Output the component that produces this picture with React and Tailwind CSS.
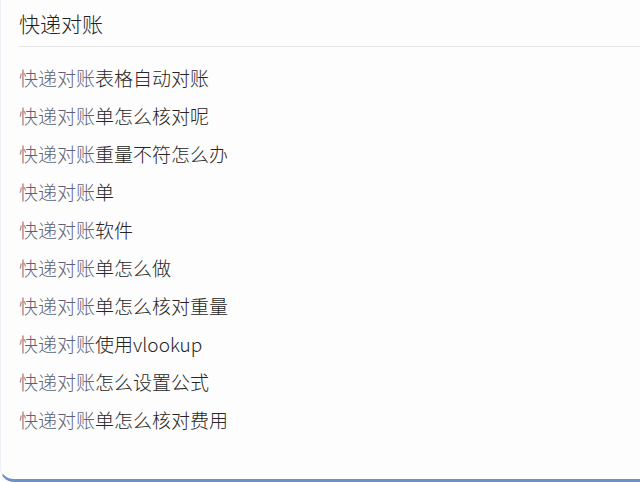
import React from 'react'

const PREFIX = '快递对账'

const suggestions = [
    '表格自动对账',
    '单怎么核对呢',
    '重量不符怎么办',
    '单',
    '软件',
    '单怎么做',
    '单怎么核对重量',
    '使用vlookup',
    '怎么设置公式',
    '单怎么核对费用',
]

export default function App() {
    return (
        <div
            className="w-[640px] h-[482px] bg-[#fdfdfd] overflow-hidden"
            style={{ fontFamily: '"Noto Sans CJK SC", "Noto Sans", sans-serif' }}
        >
            <div className="h-[482px] border-b-[3px] border-l border-[#6f90c4] border-l-[#eef1f6] rounded-bl-[14px] flex flex-col">
                {/* search input */}
                <div className="h-[47px] ml-[18px] flex items-center pt-[2px] border-b border-[#e6e6e6]">
                    <span className="text-[21px] font-light text-[#222]">{PREFIX}</span>
                </div>

                {/* suggestion list */}
                <ul className="pt-[11px] font-light">
                    {suggestions.map((rest, i) => (
                        <li key={i} className="h-[38px] pl-[18px] flex items-center text-[19px] leading-none">
                            <span className="text-[#5f6275]">{PREFIX}</span>
                            <span className="text-[#262626]">{rest}</span>
                        </li>
                    ))}
                </ul>
            </div>
        </div>
    )
}
